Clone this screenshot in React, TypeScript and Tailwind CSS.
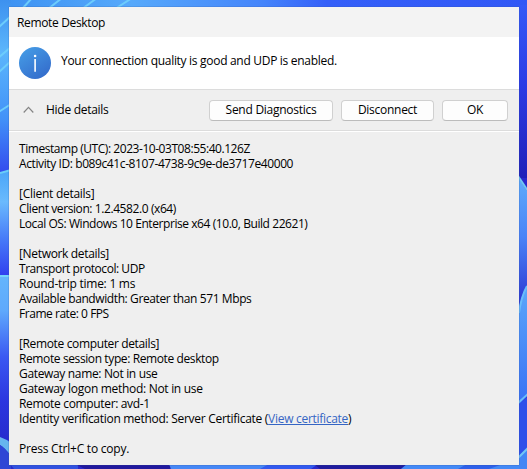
import type { ReactNode } from 'react';

const details: { text: string; tracking: string; link?: boolean }[] = [
  { text: 'Timestamp (UTC): 2023-10-03T08:55:40.126Z', tracking: 'tracking-[-0.45px]' },
  { text: 'Activity ID: b089c41c-8107-4738-9c9e-de3717e40000', tracking: 'tracking-[-0.4px]' },
  { text: '', tracking: '' },
  { text: '[Client details]', tracking: 'tracking-[-0.27px]' },
  { text: 'Client version: 1.2.4582.0 (x64)', tracking: 'tracking-[-0.41px]' },
  { text: 'Local OS: Windows 10 Enterprise x64 (10.0, Build 22621)', tracking: 'tracking-[-0.43px]' },
  { text: '', tracking: '' },
  { text: '[Network details]', tracking: 'tracking-[-0.33px]' },
  { text: 'Transport protocol: UDP', tracking: 'tracking-[-0.45px]' },
  { text: 'Round-trip time: 1 ms', tracking: 'tracking-[-0.25px]' },
  { text: 'Available bandwidth: Greater than 571 Mbps', tracking: 'tracking-[-0.4px]' },
  { text: 'Frame rate: 0 FPS', tracking: 'tracking-[-0.46px]' },
  { text: '', tracking: '' },
  { text: '[Remote computer details]', tracking: 'tracking-[-0.36px]' },
  { text: 'Remote session type: Remote desktop', tracking: 'tracking-[-0.39px]' },
  { text: 'Gateway name: Not in use', tracking: 'tracking-[-0.34px]' },
  { text: 'Gateway logon method: Not in use', tracking: 'tracking-[-0.3px]' },
  { text: 'Remote computer: avd-1', tracking: 'tracking-[-0.34px]' },
  { text: 'Identity verification method: Server Certificate ', tracking: 'tracking-[-0.29px]', link: true },
  { text: '', tracking: '' },
  { text: 'Press Ctrl+C to copy.', tracking: 'tracking-[-0.22px]' },
];

function Wallpaper() {
  return (
    <svg className="absolute inset-0" width="527" height="469" viewBox="0 0 527 469">
      <defs>
        <linearGradient id="top" x1="0" x2="1" y1="0" y2="0">
          <stop offset="0" stopColor="#3c91f2" />
          <stop offset="0.25" stopColor="#56a9fb" />
          <stop offset="0.5" stopColor="#4484fb" />
          <stop offset="0.62" stopColor="#345ff9" />
          <stop offset="1" stopColor="#3158f6" />
        </linearGradient>
        <linearGradient id="left1" x1="0" x2="0" y1="0" y2="1">
          <stop offset="0" stopColor="#3d91ef" />
          <stop offset="0.3" stopColor="#5cb6fc" />
          <stop offset="0.68" stopColor="#4292f8" />
          <stop offset="1" stopColor="#3349ee" />
        </linearGradient>
        <linearGradient id="left2" x1="0" x2="0" y1="0" y2="1">
          <stop offset="0" stopColor="#4aa5f8" />
          <stop offset="0.3" stopColor="#6abafd" />
          <stop offset="0.65" stopColor="#477bf8" />
          <stop offset="1" stopColor="#303fef" />
        </linearGradient>
        <linearGradient id="left3" x1="0" x2="0" y1="0" y2="1">
          <stop offset="0" stopColor="#64b5fc" />
          <stop offset="0.18" stopColor="#5fa9fc" />
          <stop offset="0.42" stopColor="#3a58f2" />
          <stop offset="0.65" stopColor="#2b35df" />
          <stop offset="1" stopColor="#2424c1" />
        </linearGradient>
        <linearGradient id="right1" x1="0" x2="0" y1="0" y2="1">
          <stop offset="0" stopColor="#3459f7" />
          <stop offset="0.45" stopColor="#2c3ce6" />
          <stop offset="1" stopColor="#2020b9" />
        </linearGradient>
        <linearGradient id="right2" x1="0" x2="0" y1="0" y2="1">
          <stop offset="0" stopColor="#5eacfb" />
          <stop offset="0.45" stopColor="#4b83f7" />
          <stop offset="1" stopColor="#2930cf" />
        </linearGradient>
        <linearGradient id="right3" x1="0" x2="0" y1="0" y2="1">
          <stop offset="0" stopColor="#5ba7fa" />
          <stop offset="1" stopColor="#3970f5" />
        </linearGradient>
      </defs>
      <rect width="527" height="469" fill="#2929cb" />
      <rect width="527" height="9" fill="url(#top)" />
      <rect width="11" height="174" fill="url(#left1)" />
      <g fill="none" stroke="#6cccfc" strokeWidth="2">
        <path d="M-3 29L11 16M-3 59L11 47M-3 74L11 61M-3 113L11 104" />
        <path d="M22 9L32 -2M48 9L62 -2M82 9L97 -2M115 9L132 -2" />
      </g>
      <path d="M0 173L11 170V276H0Z" fill="url(#left2)" />
      <path d="M0 173L11 170" stroke="#69cef8" strokeWidth="2" />
      <rect y="276" width="11" height="193" fill="url(#left3)" />
      <path d="M0 276H11" stroke="#74d3fc" strokeWidth="2" />
      <path d="M0 437Q6 439 11 443V456Q4 447 0 445Z" fill="#66b5ef" />
      <path d="M0 445Q5 448 11 456V469H0Z" fill="#2e46d5" />
      <rect x="518" y="5" width="9" height="173" fill="url(#right1)" />
      <path d="M518 177L527 191V310H518Z" fill="url(#right2)" />
      <path d="M518 176L528 191" stroke="#70c9f2" strokeWidth="2" />
      <path d="M527 286Q521 296 518 313V407L527 395Z" fill="url(#right3)" />
      <path d="M527 286Q521 297 519 313M518 403L528 394" fill="none" stroke="#68bdfb" strokeWidth="2" />
      <path d="M518 405L527 397V449L518 458Z" fill="#2e50ea" />
      <path d="M518 458L527 449V469H518Z" fill="#4386f5" />
      <path d="M518 458L528 448" stroke="#70c7f6" strokeWidth="2" />
      <path d="M10 464H78V469H14Z" fill="#3151df" />
      <path d="M75 464H170V469H85Z" fill="#21199d" />
      <path d="M169 464H272L265 469H171Z" fill="#4687f5" />
      <path d="M269 464H318L311 469H260Z" fill="#3259ee" />
      <path d="M314 464H407L401 469H320Z" fill="#201b9d" />
      <path d="M407 464H519V469H401Z" fill="#4389f6" />
      <path d="M458 469L467 464H503L489 469Z" fill="#2e60e9" />
    </svg>
  );
}

function DialogButton({ width, children }: { width: string; children: ReactNode }) {
  return (
    <button
      className={`flex h-[21px] items-center justify-center rounded-[4px] border border-[#d0d0d0] border-b-[#bcbcbc] bg-[#fdfdfd] pb-px tracking-[-0.27px] ${width}`}
    >
      {children}
    </button>
  );
}

export default function App() {
  return (
    <div className="relative h-[469px] w-[527px] overflow-hidden pt-[7px] pl-[9px] font-['Open_Sans','Noto_Sans',sans-serif] text-[12px] leading-[15px] text-black">
      <Wallpaper />
      <main className="relative flex h-[458px] w-[510px] flex-col bg-[#efefef] shadow-[0_0_1px_#315094]">
        <header className="flex h-[30px] shrink-0 items-center bg-[#f3f3f3] pl-[8px] tracking-[-0.35px]">
          Remote Desktop
        </header>
        <section className="flex h-[52px] shrink-0 bg-white pt-[10px] pl-[10px]">
          <svg width="32" height="32" viewBox="0 0 32 32">
            <defs>
              <linearGradient id="info" x1="0" y1="0" x2="0.7" y2="1">
                <stop offset="0" stopColor="#47a0e8" />
                <stop offset="1" stopColor="#346dcc" />
              </linearGradient>
            </defs>
            <circle cx="16" cy="16" r="16" fill="url(#info)" />
            <circle cx="16.1" cy="9" r="1.3" fill="white" />
            <path d="M16.1 12V24.8" stroke="white" strokeWidth="1.6" />
          </svg>
          <p className="mt-[6px] ml-[10px] tracking-[-0.3px]">
            Your connection quality is good and UDP is enabled.
          </p>
        </section>
        <section className="flex h-[42px] shrink-0 items-center border-t border-b border-[#dcdcdc] bg-[#efefef] pl-[14px]">
          <svg width="11" height="8" viewBox="0 0 11 8" fill="none" stroke="#858585" strokeWidth="1.2">
            <path d="M0.7 6.5L5.5 1.3L10.3 6.5" />
          </svg>
          <span className="mb-[2px] ml-[12px] w-[163px] tracking-[-0.28px]">Hide details</span>
          <div className="flex gap-[8px]">
            <DialogButton width="w-[124px]">Send Diagnostics</DialogButton>
            <DialogButton width="w-[93px]">Disconnect</DialogButton>
            <DialogButton width="w-[66px]">OK</DialogButton>
          </div>
        </section>
        <section className="flex-1 border-t border-white pt-[9px] pl-[10px]">
          {details.map((line, index) => (
            <p key={index} className={`h-[15px] whitespace-pre ${line.tracking}`}>
              {line.text}
              {line.link && (
                <>
                  (<a className="text-[#3565c4] underline underline-offset-[1px]">View certificate</a>)
                </>
              )}
            </p>
          ))}
        </section>
      </main>
    </div>
  );
}
